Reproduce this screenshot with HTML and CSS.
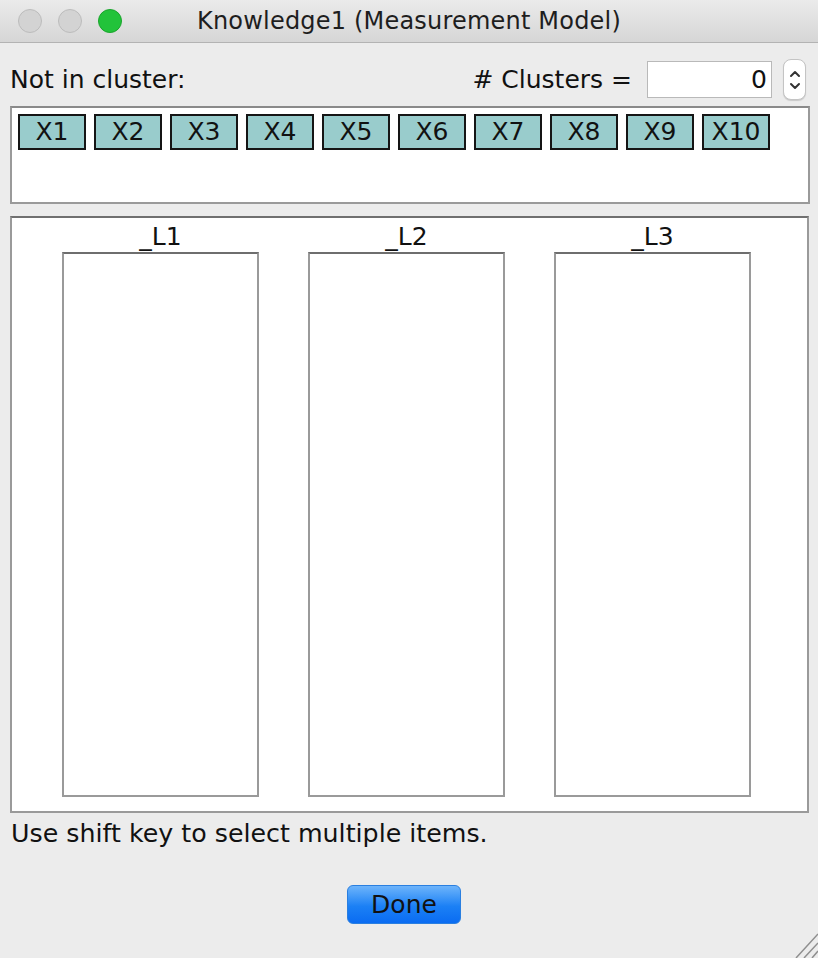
FILE: index.html
```html
<!DOCTYPE html>
<html lang="en">
<head>
    <meta charset="UTF-8">
    <title>Knowledge1 (Measurement Model)</title>
    <link rel="stylesheet" href="styles.css">
</head>
<body>
    <div class="window">
        <!-- Title bar -->
        <div class="titlebar">
            <div class="lights">
                <span class="light"></span>
                <span class="light"></span>
                <span class="light green"></span>
            </div>
            <div class="title">Knowledge1 (Measurement Model)</div>
            <div></div>
        </div>

        <div class="content">
            <div class="top-row">
                <span>Not in cluster:</span>
                <div class="count-group">
                    <span class="count-label"># Clusters =</span>
                    <div class="count-field">0</div>
                    <div class="spinner">
                        <svg width="12" height="30" viewBox="0 0 12 30">
                            <path d="M2 11 L6 7 L10 11" fill="none" stroke="#333" stroke-width="2" stroke-linecap="round" stroke-linejoin="round"/>
                            <path d="M2 19 L6 23 L10 19" fill="none" stroke="#333" stroke-width="2" stroke-linecap="round" stroke-linejoin="round"/>
                        </svg>
                    </div>
                </div>
            </div>

            <!-- Unassigned variables -->
            <div class="pool">
                <div class="chip">X1</div>
                <div class="chip">X2</div>
                <div class="chip">X3</div>
                <div class="chip">X4</div>
                <div class="chip">X5</div>
                <div class="chip">X6</div>
                <div class="chip">X7</div>
                <div class="chip">X8</div>
                <div class="chip">X9</div>
                <div class="chip">X10</div>
            </div>

            <!-- Latent clusters -->
            <div class="clusters">
                <div class="cluster">
                    <div class="cluster-name">_L1</div>
                    <div class="cluster-box"></div>
                </div>
                <div class="cluster">
                    <div class="cluster-name">_L2</div>
                    <div class="cluster-box"></div>
                </div>
                <div class="cluster">
                    <div class="cluster-name">_L3</div>
                    <div class="cluster-box"></div>
                </div>
            </div>

            <p class="hint">Use shift key to select multiple items.</p>

            <div class="actions">
                <button type="button" class="done">Done</button>
            </div>
        </div>

        <svg class="grip" width="24" height="28" viewBox="0 0 24 28">
            <path d="M2 28 L24 4 M10 28 L24 13 M18 28 L24 21" stroke="#8f8f8f" stroke-width="1.5"/>
        </svg>
    </div>
</body>
</html>
```

FILE: styles.css
```css
body { margin: 0; background: #ececec; font-family: "DejaVu Sans", sans-serif; color: #111; }
.window { position: relative; width: 818px; height: 958px; overflow: hidden; background: #ececec; }

.titlebar { height: 42px; display: grid; grid-template-columns: 1fr auto 1fr; align-items: center; background: linear-gradient(#ebebeb, #d6d6d6); border-bottom: 1px solid #b3b3b3; }
.lights { display: flex; gap: 16px; padding-left: 18px; }
.light { width: 22px; height: 22px; border-radius: 50%; background: #d3d3d3; border: 1px solid #bcbcbc; }
.light.green { background: #22c33a; border-color: #1aa52c; }
.title { font-size: 24px; color: #1e1e1e; letter-spacing: 0.2px; }

.content { padding: 16px 8px 0 10px; }

.top-row { display: flex; justify-content: space-between; align-items: center; height: 41px; padding-right: 4px; font-size: 25px; line-height: 30px; }
.count-group { display: flex; align-items: center; }
.count-label { margin-right: 15px; }
.count-field { width: 119px; height: 35px; line-height: 35px; background: #fff; border: 1px solid #b9b9b9; text-align: right; padding-right: 4px; margin-right: 11px; }
.spinner { width: 21px; height: 39px; background: #fff; border: 1px solid #c4c4c4; border-radius: 8px; box-shadow: 0 1px 1px rgba(0,0,0,0.15); display: flex; align-items: center; justify-content: center; }

.pool { margin-top: 6px; width: 790px; height: 88px; padding: 6px 0 0 6px; background: #fff; border: 2px solid #9a9a9a; border-top-color: #8a8a8a; display: flex; align-items: flex-start; gap: 8px; }
.chip { width: 64px; height: 32px; border: 2px solid #151515; background: #99cccc; font-size: 25px; line-height: 32px; text-align: center; }

.clusters { margin-top: 12px; margin-right: 1px; height: 575px; background: #fff; border: 2px solid #9a9a9a; border-top-color: #707070; padding: 4px 0 14px 50px; display: flex; gap: 49px; }
.cluster { width: 197px; display: flex; flex-direction: column; }
.cluster-name { font-size: 25px; line-height: 30px; text-align: center; }
.cluster-box { flex: 1; border: 2px solid #9a9a9a; border-top-color: #6e6e6e; }

.hint { margin: 6px 0 0; font-size: 25.3px; line-height: 30px; padding-left: 1px; }

.actions { display: flex; justify-content: center; margin-top: 36px; padding-right: 12px; }
.done { width: 114px; height: 39px; border: 1px solid #2a7fe0; border-radius: 6px; background: linear-gradient(#6db4fb, #1b80f5 55%, #0a6cf2); font-family: "DejaVu Sans", sans-serif; font-size: 25px; color: #111; padding: 0; cursor: pointer; }

.grip { position: absolute; right: 0; bottom: 0; }
```
